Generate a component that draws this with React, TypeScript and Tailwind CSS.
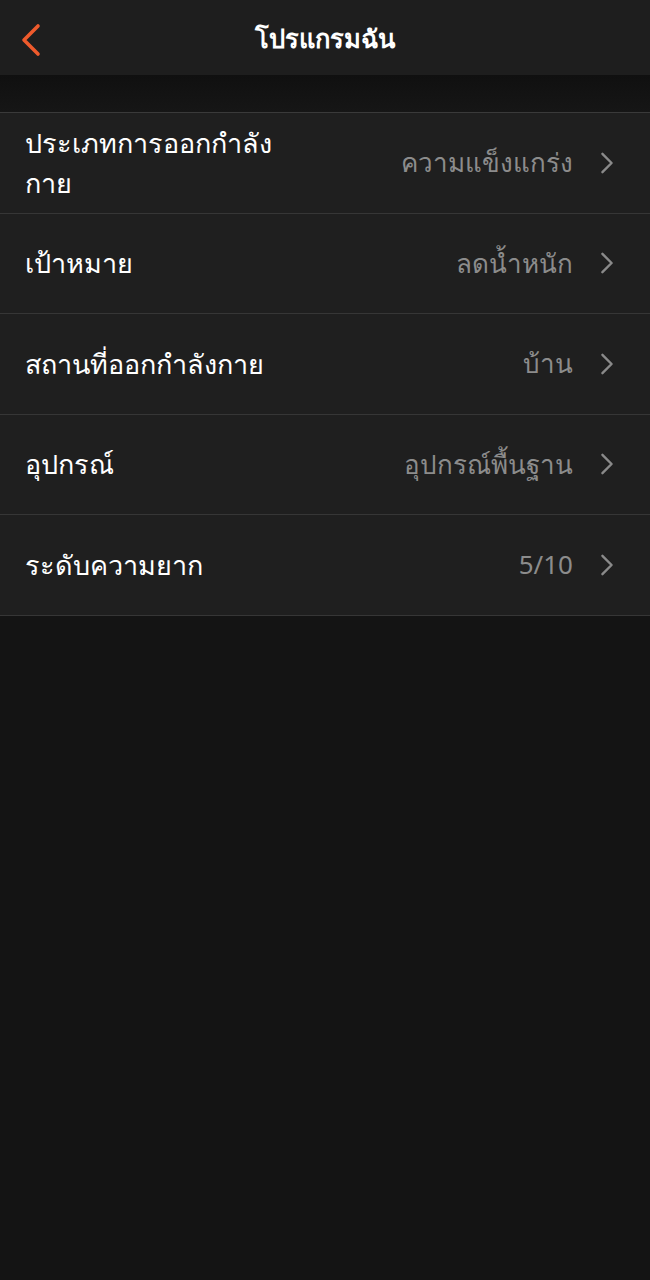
const rows = [
  { label: "ประเภทการออกกำลังกาย", value: "ความแข็งแกร่ง", wrap: true },
  { label: "เป้าหมาย", value: "ลดน้ำหนัก", wrap: false },
  { label: "สถานที่ออกกำลังกาย", value: "บ้าน", wrap: false },
  { label: "อุปกรณ์", value: "อุปกรณ์พื้นฐาน", wrap: false },
  { label: "ระดับความยาก", value: "5/10", wrap: false },
];

function Chevron() {
  return (
    <svg
      viewBox="0 0 14 24"
      className="h-[22px] w-[14px] text-[#8a8a8a]"
      fill="none"
      stroke="currentColor"
      strokeWidth="2.6"
      strokeLinecap="round"
      strokeLinejoin="round"
    >
      <path d="M2 2l10 10L2 22" />
    </svg>
  );
}

export default function App() {
  return (
    <div className="min-h-[1280px] w-[650px] bg-[#141414] font-['Noto_Sans','Liberation_Sans',sans-serif] text-white">
      {/* nav bar */}
      <header className="relative flex h-[75px] items-center justify-center bg-[#1e1e1e]">
        <button type="button" className="absolute left-[20px] top-[23px] text-[#ee5a2c]">
          <svg
            viewBox="0 0 22 34"
            className="h-[34px] w-[22px]"
            fill="none"
            stroke="currentColor"
            strokeWidth="3.6"
            strokeLinecap="round"
            strokeLinejoin="round"
          >
            <path d="M18 3L4 17l14 14" />
          </svg>
        </button>
        <h1 className="mt-[2px] text-[25.5px] font-bold">โปรแกรมฉัน</h1>
      </header>

      <div className="h-[37px] bg-gradient-to-b from-[#101010] to-[#161616]" />

      <ul className="border-t border-[#3a3a3a] bg-[#1f1f1f]">
        {rows.map((r) => (
          <li
            key={r.label}
            className="flex h-[100.5px] items-center justify-between border-b border-[#363636] pl-[25px] pr-[36px]"
          >
            <span className={r.wrap ? "w-[265px] text-[27px] leading-[40px]" : "text-[27px] leading-[40px]"}>
              {r.label}
            </span>
            <span className="flex items-center gap-[27px] text-[26px] text-[#8c8c8c]">
              {r.value}
              <Chevron />
            </span>
          </li>
        ))}
      </ul>
    </div>
  );
}
